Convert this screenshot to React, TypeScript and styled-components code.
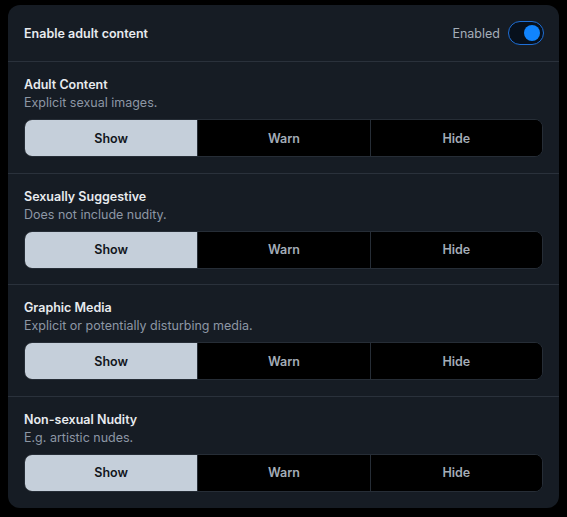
import React, { useState } from "react";
import styled, { createGlobalStyle } from "styled-components";

const Global = createGlobalStyle`
  html, body { margin: 0; padding: 0; background: #000; }
  body { font-family: Inter, "Noto Sans", "Liberation Sans", sans-serif; -webkit-font-smoothing: antialiased; }
  * { box-sizing: border-box; }
`;

const Page = styled.div`
  padding: 5px 8px 10px 8px;
`;

const Card = styled.div`
  background: #161c24;
  border-radius: 12px;
  overflow: hidden;
  display: flex;
  flex-direction: column;
`;

const Header = styled.div`
  height: 57px;
  display: flex;
  align-items: center;
  justify-content: space-between;
  padding: 0 15px 0 16px;
  border-bottom: 1px solid #2a313b;
`;

const HeaderTitle = styled.div`
  color: #e8ebef;
  font-size: 12.5px;
  font-weight: 600;
  padding-top: 1px;
`;

const ToggleWrap = styled.div`
  display: flex;
  align-items: center;
  gap: 8px;
`;

const ToggleLabel = styled.span`
  color: #a5aeb9;
  font-size: 12.5px;
  padding-top: 1px;
`;

const Toggle = styled.button<{ $on: boolean }>`
  width: 36px;
  height: 24px;
  border-radius: 12px;
  border: 1.5px solid ${(p) => (p.$on ? "#1f6fd6" : "#3a424d")};
  background: #07101c;
  padding: 0 3px;
  display: flex;
  align-items: center;
  justify-content: ${(p) => (p.$on ? "flex-end" : "flex-start")};
  cursor: pointer;
`;

const Knob = styled.span<{ $on: boolean }>`
  width: 16px;
  height: 16px;
  border-radius: 50%;
  background: ${(p) => (p.$on ? "#1184fd" : "#6b7480")};
`;

const Section = styled.div<{ $last?: boolean }>`
  padding: 14px 16px 15.67px 16px;
  border-bottom: ${(p) => (p.$last ? "none" : "1px solid #2a313b")};
  display: flex;
  flex-direction: column;
`;

const Title = styled.div`
  color: #e8ebef;
  font-size: 12.5px;
  font-weight: 600;
  line-height: 18px;
`;

const Desc = styled.div`
  color: #8d97a4;
  font-size: 12.5px;
  line-height: 18px;
  margin-bottom: 7px;
`;

const Segmented = styled.div`
  display: grid;
  grid-template-columns: 1fr 1fr 1fr;
  height: 38px;
  border: 1px solid #262d36;
  border-radius: 8px;
  overflow: hidden;
  background: #000;
`;

const Segment = styled.button<{ $active: boolean }>`
  border: none;
  border-left: 1px solid #262d36;
  &:first-child { border-left: none; }
  background: ${(p) => (p.$active ? "#c5cfda" : "#000")};
  color: ${(p) => (p.$active ? "#12161c" : "#a3acb7")};
  font-family: inherit;
  font-size: 12.5px;
  font-weight: 600;
  cursor: pointer;
`;

const items = [
  { title: "Adult Content", desc: "Explicit sexual images." },
  { title: "Sexually Suggestive", desc: "Does not include nudity." },
  { title: "Graphic Media", desc: "Explicit or potentially disturbing media." },
  { title: "Non-sexual Nudity", desc: "E.g. artistic nudes." },
];

const opts = ["Show", "Warn", "Hide"];

export default function App() {
  const [on, setOn] = useState(true);
  const [vals, setVals] = useState<string[]>(items.map(() => "Show"));
  return (
    <>
      <Global />
      <Page>
        <Card>
          <Header>
            <HeaderTitle>Enable adult content</HeaderTitle>
            <ToggleWrap>
              <ToggleLabel>{on ? "Enabled" : "Disabled"}</ToggleLabel>
              <Toggle $on={on} onClick={() => setOn(!on)}>
                <Knob $on={on} />
              </Toggle>
            </ToggleWrap>
          </Header>
          {items.map((it, i) => (
            <Section key={it.title} $last={i === items.length - 1}>
              <Title>{it.title}</Title>
              <Desc>{it.desc}</Desc>
              <Segmented>
                {opts.map((o) => (
                  <Segment
                    key={o}
                    $active={vals[i] === o}
                    onClick={() => setVals(vals.map((v, j) => (j === i ? o : v)))}
                  >
                    {o}
                  </Segment>
                ))}
              </Segmented>
            </Section>
          ))}
        </Card>
      </Page>
    </>
  );
}
